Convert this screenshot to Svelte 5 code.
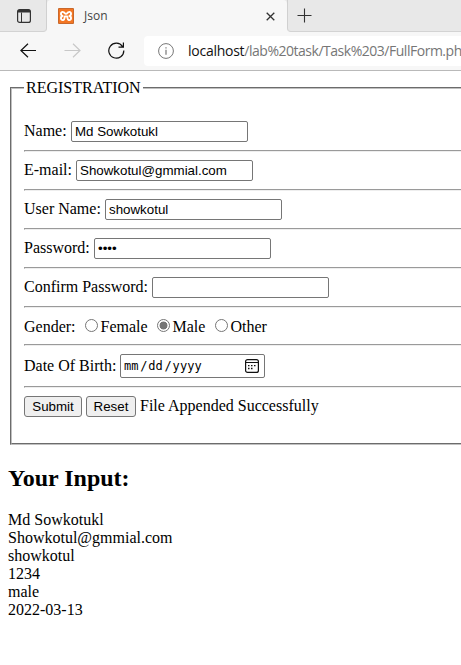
<script>
  const fields = [
    { label: 'Name:', type: 'text', value: 'Md Sowkotukl', left: 71 },
    { label: 'E-mail:', type: 'text', value: 'Showkotul@gmmial.com', left: 76 },
    { label: 'User Name:', type: 'text', value: 'showkotul', left: 105 },
    { label: 'Password:', type: 'password', value: '1234', left: 94 },
    { label: 'Confirm Password:', type: 'password', value: '', left: 152 }
  ];
  const genders = [
    { name: 'Female', width: 72 },
    { name: 'Male', width: 58 },
    { name: 'Other', width: 60 }
  ];
  const output = ['Md Sowkotukl', 'Showkotul@gmmial.com', 'showkotul', '1234', 'male', '2022-03-13'];
  let gender = $state('Male');
</script>

<div class="window">
  <header>
    <div class="tabs">
      <div class="tabmenu">
        <svg width="14" height="14" viewBox="0 0 14 14" fill="none" stroke="#333">
          <rect x=".6" y=".6" width="12.8" height="12.8" rx="2" stroke-width="1.2" />
          <path d="M1 2.2h12" stroke-width="2.6" />
          <path d="M4.5 3.5v10" />
        </svg>
      </div>
      <div class="tab">
        <svg class="logo" width="16" height="16" viewBox="0 0 16 16">
          <rect width="16" height="16" rx="1" fill="#c9682b" />
          <rect x="1" y="1" width="14" height="14" fill="#f37623" />
          <path d="M5.2 4C2.5 3.2 2.2 7.2 4.6 8C2.2 8.8 2.5 12.8 5.2 12C7.1 11.4 6.3 9.6 6.8 8.4H9.2C9.7 9.6 8.9 11.4 10.8 12C13.5 12.8 13.8 8.8 11.4 8C13.8 7.2 13.5 3.2 10.8 4C9.2 4.4 9.5 5.9 8 5.9S6.8 4.4 5.2 4Z" fill="none" stroke="#fff" stroke-width="1.9" stroke-linejoin="round" />
        </svg>
        <span>Json</span>
        <svg class="close" width="9" height="9" viewBox="0 0 9 9" fill="none" stroke="#333" stroke-width="1.3"><path d="M.7.7l7.6 7.6M8.3.7L.7 8.3" /></svg>
      </div>
      <div class="newtab">
        <svg width="15" height="15" viewBox="0 0 15 15" fill="none" stroke="#333" stroke-width="1.1"><path d="M7.5.5v14M.5 7.5h14" /></svg>
      </div>
    </div>
    <div class="toolbar">
      <svg class="back" width="17" height="15" viewBox="0 0 17 15" fill="none" stroke="#111" stroke-width="1.2"><path d="M16 7.5H.9M8 .7L.9 7.5l7.1 6.8" /></svg>
      <svg class="forward" width="17" height="15" viewBox="0 0 17 15" fill="none" stroke="#c8c8c8" stroke-width="1.2"><path d="M.5 7.5H16M9 .7l7 6.8-7 6.8" /></svg>
      <svg class="reload" width="17" height="17" viewBox="0 0 17 17" fill="none" stroke="#111" stroke-width="1.2"><path d="M14.6 4.6A7.5 7.5 0 1 0 15.8 8.5M15.4.4v4.7h-4.9" /></svg>
      <div class="address">
        <svg width="16" height="16" viewBox="0 0 16 16" fill="none" stroke="#777"><circle cx="8" cy="8" r="7.4" /><path d="M8 6.8v5M8 4.2v1.3" stroke-width="1.2" /></svg>
        <div class="url"><b>localhost</b>/lab%20task/Task%203/FullForm.ph</div>
      </div>
    </div>
  </header>

  <main>
    <fieldset>
      <legend>REGISTRATION</legend>
      {#each fields as field}
        <div class="row">
          <label style="width:{field.left - 24}px">{field.label}</label>
          <input type={field.type} value={field.value} />
        </div>
        <hr />
      {/each}
      <div class="row gender">
        <span class="caption">Gender:</span>
        {#each genders as option}
          <label style="width:{option.width}px"><input type="radio" value={option.name} bind:group={gender} />{option.name}</label>
        {/each}
      </div>
      <hr />
      <div class="row birth">
        <span class="datelabel">Date Of Birth:</span>
        <div class="date">
          <span class="mm">mm</span><span class="slash">/</span><span class="dd">dd</span><span class="slash">/</span><span>yyyy</span>
          <svg width="14" height="14" viewBox="0 0 14 14" fill="none" stroke="#111">
            <rect x=".6" y=".6" width="12.8" height="12.8" rx="2" stroke-width="1.2" />
            <path d="M1 3.5h12" />
            <path d="M3 6.7h1.5M6 6.7h1.5M9 6.7h1.5M3 9.5h1.5M6 9.5h1.5" stroke-width="1.3" />
          </svg>
        </div>
      </div>
      <hr />
      <div class="row">
        <button class="submit">Submit</button>
        <button class="reset">Reset</button>
        <span class="status">File Appended Successfully</span>
      </div>
    </fieldset>
    <h2>Your Input:</h2>
    <div class="output">
      {#each output as line}<div>{line}</div>{/each}
    </div>
  </main>
</div>

<style>
  .window { width: 461px; height: 665px; overflow: hidden; background: #fff; color: #000; font: 16px/18px "Liberation Serif", "Times New Roman", serif; }
  header { height: 71px; box-sizing: border-box; background: #f7f7f7; border-bottom: 1px solid #b9b9b9; font-family: "Open Sans", "Noto Sans", sans-serif; }
  .tabs { display: flex; height: 32px; background: linear-gradient(#e8e8e8 50%, #f7f7f7 50%); }
  .tabmenu { width: 47px; box-sizing: border-box; padding: 9px 0 0 17px; background: #e8e8e8; border-right: 1px solid #d0d0d0; border-bottom: 1px solid #d3d3d3; border-bottom-right-radius: 4px; }
  .tab { display: flex; width: 240px; height: 32px; background: #f7f7f7; border-radius: 4px 4px 0 0; }
  .tab span { margin: 7px 0 0 10px; width: 182px; font-size: 12px; color: #444; }
  .logo { margin: 8px 0 0 11px; }
  .close { margin-top: 12px; }
  .newtab { flex: 1; box-sizing: border-box; padding: 8px 0 0 9px; background: #e8e8e8; border-left: 1px solid #d0d0d0; border-bottom: 1px solid #d3d3d3; border-bottom-left-radius: 4px; }
  .tabs svg, .toolbar svg { display: block; flex: none; }
  .toolbar { display: flex; height: 38px; }
  .back { margin: 11px 0 0 20px; }
  .forward { margin: 11px 0 0 27px; }
  .reload { margin: 10px 0 0 27px; }
  .address { display: flex; flex: none; width: 317px; height: 30px; margin: 4px 0 0 19px; background: #fff; border-radius: 4px 0 0 4px; }
  .address svg { margin: 7px 0 0 14px; }
  .url { margin: 6px 0 0 14px; font-size: 14px; line-height: 18px; letter-spacing: -0.48px; color: #767676; white-space: nowrap; }
  .url b { font-weight: 400; letter-spacing: -0.26px; color: #111; }
  main { width: 640px; padding: 8px 8px 0; box-sizing: border-box; }
  fieldset { height: 366px; margin: 0 2px; box-sizing: border-box; padding: 24px 12px 0; border: 2px groove #c0c0c0; min-width: 0; }
  legend { padding: 0 2px; height: 18px; }
  .row { display: flex; height: 21px; align-items: center; white-space: pre; }
  .row > label { flex: none; padding-bottom: 2px; }
  .row > input { flex: none; width: 177px; height: 21px; box-sizing: border-box; margin: 0; padding: 1px 3px; border: 1px solid #767676; border-radius: 2px; background: #fff; color: #000; font: 13.333px "Liberation Sans", Arial, sans-serif; outline: 0; }
  hr { height: 2px; margin: 8px 0; box-sizing: border-box; border: solid; border-width: 1px; border-color: #9a9a9a #eee #eee #9a9a9a; }
  .gender { height: 20px; }
  .caption { width: 61px; }
  .gender > .caption { padding-top: 1px; }
  .row.gender > label { display: flex; align-items: center; padding: 1px 0 0; }
  .gender input { appearance: none; width: 13px; height: 13px; margin: -3px 2.5px 0 0; border: 1px solid #767676; border-radius: 50%; box-sizing: border-box; background: #fff; }
  .gender input:checked { background: radial-gradient(circle, #767676 3.6px, #fff 4.3px); }
  .birth { height: 24px; }
  .datelabel { width: 96px; }
  .date { display: flex; align-items: center; width: 145px; height: 24px; box-sizing: border-box; border: 1px solid #767676; border-radius: 2px; padding-left: 3px; font: 12px "DejaVu Sans Mono", monospace; letter-spacing: 0.1px; }
  .date span { flex: none; }
  .mm { width: 16.3px; }
  .slash { width: 8px; }
  .dd { width: 16.3px; }
  .date svg { margin-left: auto; margin-right: 5px; }
  button { height: 21px; margin: 0 4px 0 0; box-sizing: border-box; padding: 0; border: 1px solid #767676; border-radius: 3px; background: #efefef; color: #000; font: 13.333px "Liberation Sans", Arial, sans-serif; }
  .submit { width: 58px; }
  .reset { width: 50px; }
  .status { padding-bottom: 2px; }
  h2 { margin: 20px 0 19px; font-size: 24px; line-height: 27px; font-weight: 700; }
</style>
